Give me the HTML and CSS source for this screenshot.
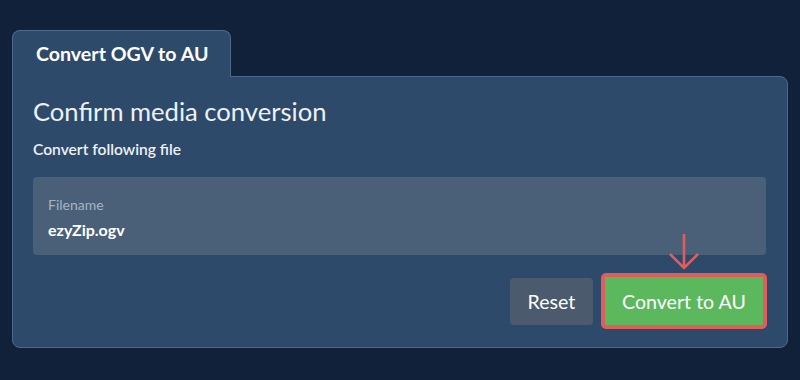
FILE: index.html
```html
<!DOCTYPE html>
<html>
<head>
<meta charset="utf-8">
<title>Convert OGV to AU</title>
<link rel="stylesheet" href="styles.css">
</head>
<body>
    <div class="wrap">
        <div class="tabs">
            <div class="tab">Convert OGV to AU</div>
        </div>
        <div class="panel">
            <h2 class="title">Confirm media conversion</h2>
            <div class="sub">Convert following file</div>
            <div class="field">
                <div class="label">Filename</div>
                <div class="value">ezyZip.ogv</div>
            </div>
            <div class="actions">
                <button class="btn btn-reset">Reset</button>
                <div class="go">
                    <svg class="arrow" width="30" height="36" viewBox="0 0 30 36">
                        <path d="M15 0 V34 M1 20 L15 34 L29 20" fill="none" stroke="#e05d5d" stroke-width="2.6"/>
                    </svg>
                    <button class="btn btn-convert">Convert to AU</button>
                </div>
            </div>
        </div>
    </div>
</body>
</html>
```

FILE: styles.css
```css
body {
    margin: 0;
    background: #11213a;
    font-family: Lato, "Open Sans", sans-serif;
    color: #f0f3f6;
}

.wrap {
    padding: 30px 12px 0 12px;
}

.tabs {
    display: flex;
}

.tab {
    position: relative;
    z-index: 1;
    width: 219px;
    height: 47px;
    box-sizing: border-box;
    padding: 11px 0 0 23px;
    margin-bottom: -1px;
    background: #2d4a6b;
    border: 1px solid #4b6a8e;
    border-bottom: none;
    border-radius: 8px 8px 0 0;
    font-size: 19.6px;
    font-weight: 700;
    color: #fff;
}

.panel {
    height: 272px;
    box-sizing: border-box;
    padding: 17px 21px 0 20px;
    background: #2d4a6b;
    border: 1px solid #4b6a8e;
    border-radius: 0 8px 8px 8px;
}

.title {
    margin: 0;
    font-size: 25.6px;
    font-weight: 400;
    line-height: 34px;
    color: #eef1f4;
}

.sub {
    margin-top: 12px;
    font-size: 15.6px;
    font-weight: 600;
    color: #eef1f4;
}

.field {
    margin-top: 19px;
    height: 78px;
    box-sizing: border-box;
    padding: 19px 15px 0 15px;
    background: #4a6079;
    border-radius: 4px;
}

.label {
    font-size: 14px;
    color: #a7b3c1;
}

.value {
    margin-top: 7px;
    font-size: 16px;
    font-weight: 700;
    color: #fff;
}

.actions {
    display: flex;
    justify-content: flex-end;
    align-items: flex-end;
    gap: 8px;
    margin-top: -21px;
    margin-right: -1px;
}

.go {
    display: flex;
    flex-direction: column;
    align-items: center;
}

.arrow {
    display: block;
    margin-bottom: 3px;
}

.btn {
    font-family: Lato, "Open Sans", sans-serif;
    font-size: 19.6px;
    color: #fff;
    border: none;
    border-radius: 4px;
    cursor: pointer;
}

.btn-reset {
    width: 83px;
    height: 47px;
    margin-bottom: 4px;
    background: #4b5a6c;
}

.btn-convert {
    width: 166px;
    height: 56px;
    background: #5cb85c;
    border: 4px solid #e05d5d;
    border-radius: 5px;
}
```
